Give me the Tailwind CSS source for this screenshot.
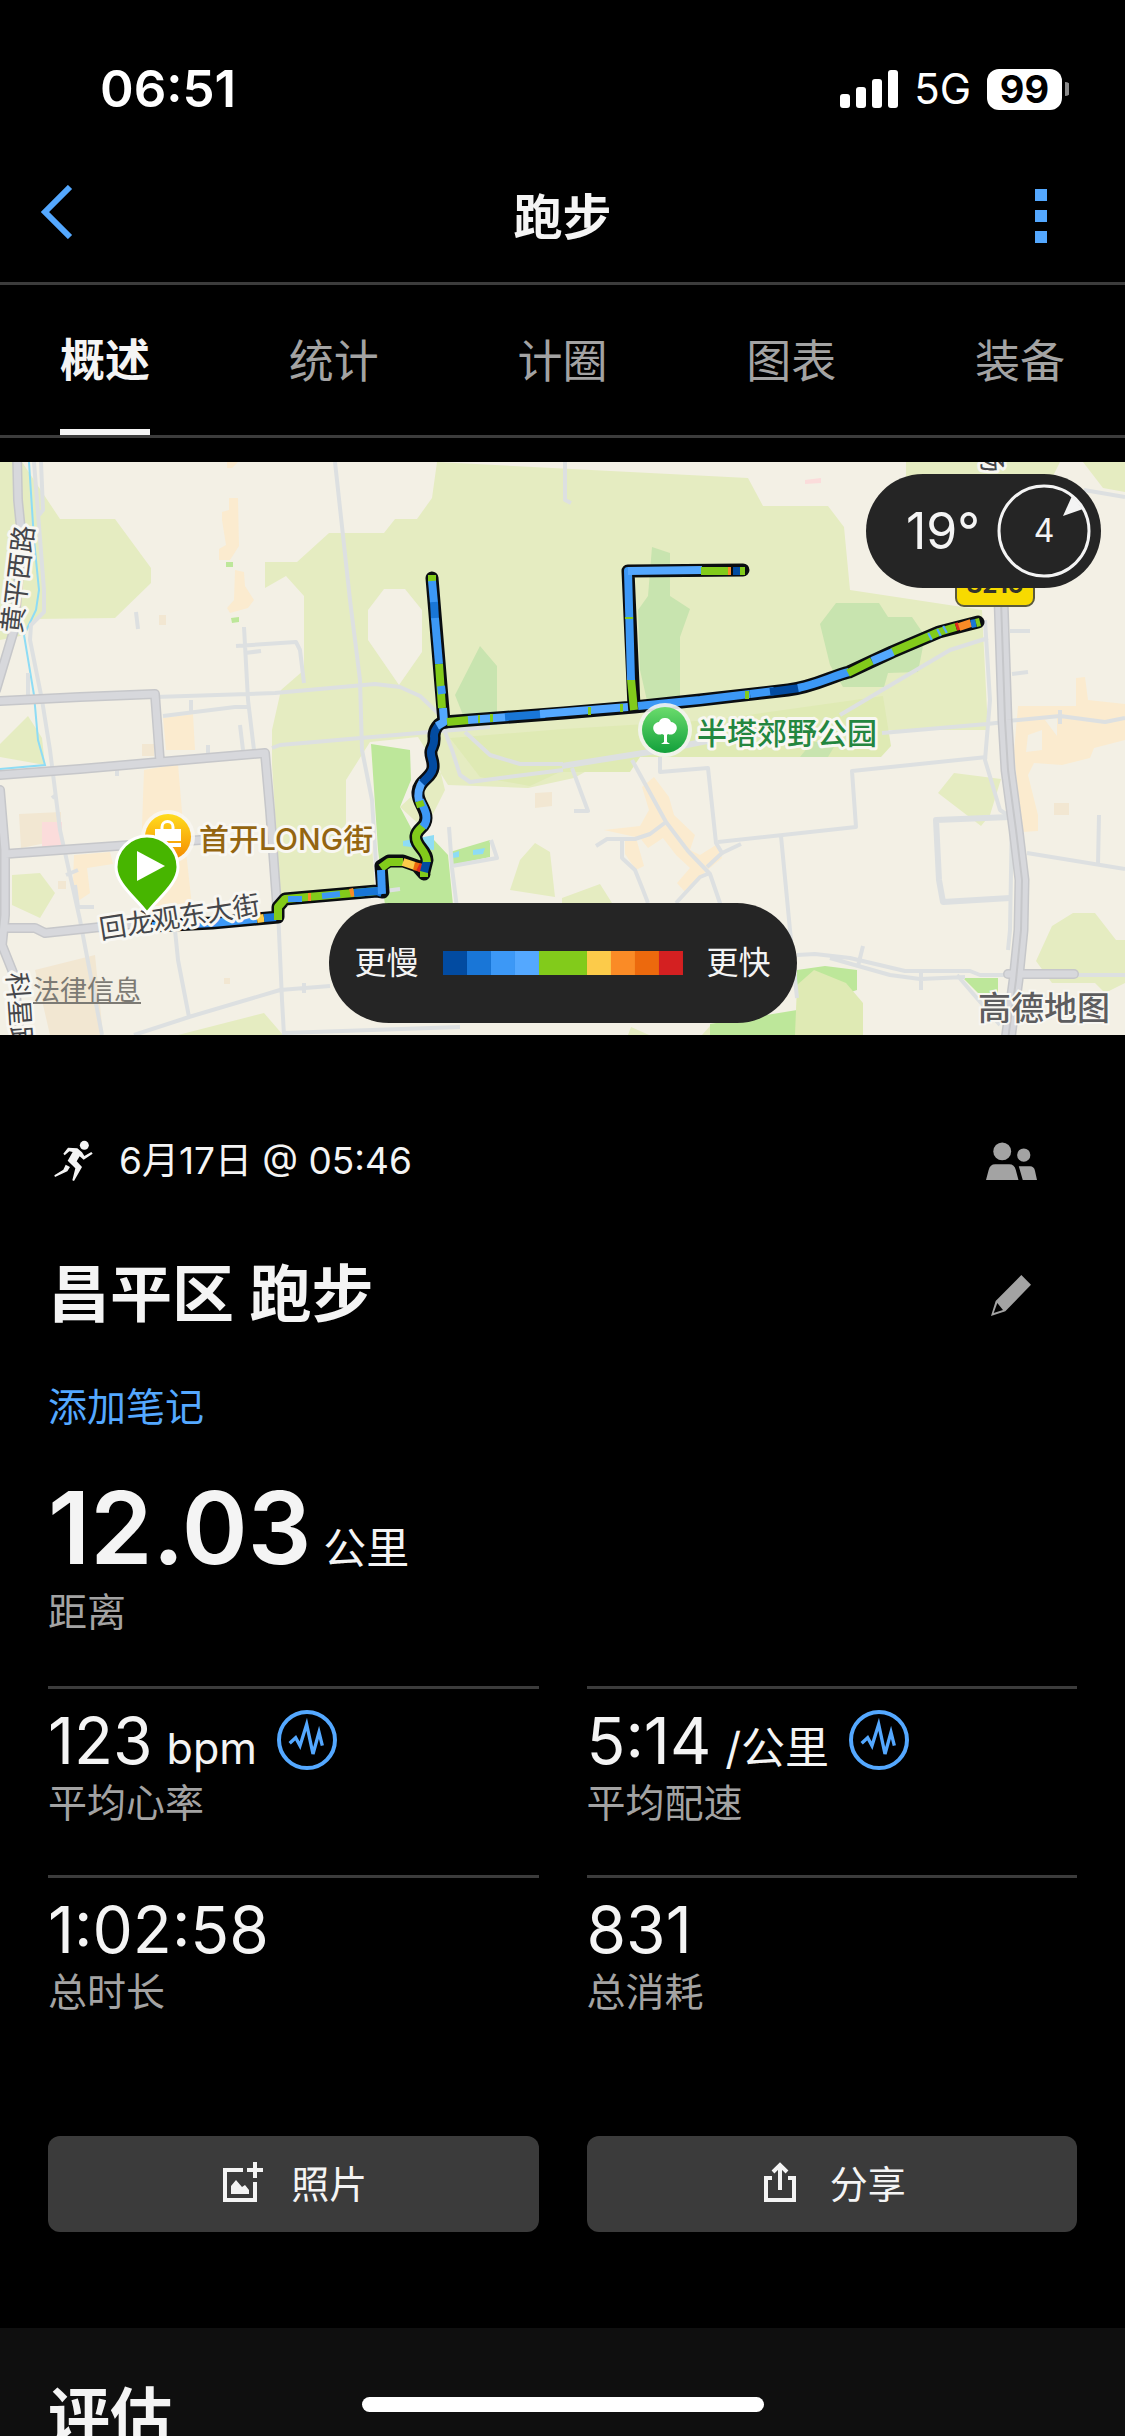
<!DOCTYPE html>
<html lang="zh-CN">
<head>
    <meta charset="UTF-8">
    <meta name="viewport" content="width=device-width, initial-scale=1.0">
    <title>跑步</title>
    <script src="https://cdn.jsdelivr.net/npm/@tailwindcss/browser@4"></script>
</head>
<body class="bg-black text-[#f4f4f4] font-[Inter,'Noto_Sans_CJK_SC',sans-serif]">
    <div class="relative flex flex-col h-screen overflow-hidden">
        <!-- Status bar -->
        <div class="flex shrink-0 items-center justify-between pt-[59px] pb-[31px] pl-[100px] pr-14 text-white leading-[60px]">
            <span class="text-[51px] font-semibold">06:51</span>
            <div class="flex items-center">
                <svg class="w-[58px] h-[38px] mr-4" viewBox="0 0 58 38" fill="currentColor">
                    <rect x="0" y="24" width="10" height="14" rx="3"/>
                    <rect x="16" y="17" width="10" height="21" rx="3"/>
                    <rect x="32" y="9" width="10" height="29" rx="3"/>
                    <rect x="48" y="0" width="10" height="38" rx="3"/>
                </svg>
                <span class="text-[42px] mr-4">5G</span>
                <span class="w-[75px] h-[41px] rounded-xl bg-white text-black text-center text-[38px] leading-[41px] font-bold">99</span>
                <svg class="w-1 h-[14px] ml-[3px]" viewBox="0 0 4 14"><path d="M0 0a7 7 0 0 1 0 14z" fill="#8a8a8a"/></svg>
            </div>
        </div>

        <!-- Header -->
        <header class="grid shrink-0 grid-cols-3 items-center h-[135px] border-b-3 border-[#3c3c3c] px-10">
            <button aria-label="返回" class="justify-self-start -mt-2">
                <svg class="w-[34px] h-[54px]" viewBox="0 0 34 54" fill="none" stroke="#54a8ff" stroke-width="6"><path d="M30 2 5 27l25 25"/></svg>
            </button>
            <h1 class="text-[49px] leading-[60px] pt-1 font-semibold text-center">跑步</h1>
            <button aria-label="更多" class="flex flex-col gap-[9px] justify-self-end mr-[38px]">
                <i class="size-3 bg-[#54a8ff]"></i>
                <i class="size-3 bg-[#54a8ff]"></i>
                <i class="size-3 bg-[#54a8ff]"></i>
            </button>
        </header>

        <!-- Tabs -->
        <nav class="flex shrink-0 justify-between h-[153px] border-b-3 border-[#3c3c3c] px-15 text-[45px] text-[#a3a3a3]">
            <button class="border-b-6 border-[#f4f4f4] pt-2 text-[#f4f4f4] font-semibold">概述</button>
            <button class="pt-1">统计</button>
            <button class="pt-1">计圈</button>
            <button class="pt-1">图表</button>
            <button class="pt-1">装备</button>
        </nav>

        <!-- Map -->
        <div class="relative shrink-0 mt-6">
            <svg class="block w-full" viewBox="0 462 1125 573" font-family="Inter, 'Noto Sans CJK SC', sans-serif">
                <defs>
                    <linearGradient id="park" x1="0" y1="0" x2="0" y2="1"><stop offset="0" stop-color="#6bdc6c"/><stop offset="1" stop-color="#12a03b"/></linearGradient>
                    <linearGradient id="shop" x1="0" y1="0" x2="0" y2="1"><stop offset="0" stop-color="#ffdc1e"/><stop offset="1" stop-color="#f58a00"/></linearGradient>
                </defs>
                <rect y="462" width="1125" height="573" fill="#f3f0e5"/>

                <!-- land -->
                <g fill="#e5ecc1">
                    <path d="M0 462h22l38 57h55l36 49v15l-36 35-80 1-10 16-25 5zM0 744l28-28 14 22 3 27-45-8zM12 875l28-2 15 20-15 25-28-13zM178 1035l86-22 19 22z"/>
                    <path d="M437 462l-5 36-15 21h-22l-11 14h-55l-32 29h-32v26l21-12 18 20v74l-23 20-9 40v34l8 131 95-5-3-45-26-12V780l24-38 48-5 30 48 80 3 46-10 29-16 20-17h240l15-15h110l-6-120-132-20-6-63-16-21h-65l-15-28zM906 462h154l-15 30H906zM1083 462l20 26 22 4v-30zM400 807l40-37 5 20-20 40zM520 860l15-17 15 9 5 45-45-7z"/>
                    <path d="M938 793l16-20 47 6-11 36-9 11zM1036 961l16-35 21-13h22l21 27h9v43l-20 10-10-10h-43zM562 898l38-14 12 19h-50zM702 1035l8-9h75l8 9zM628 1035l3-8 18 8z"/>
                </g>
                <path d="M450 738l113-9 150-9 170-24 8 50-10 11H640l-10 15h-70l-30 14-50-9z" fill="#dfeab4"/>
                <path d="M368 610l16-21h21l17 21v42l-23 33-31-45zM346 785l15-25 9 8v72l-24-12z" fill="#f3f0e5"/>
                <g fill="#c8e4af">
                    <path d="M480 646l17 20v59l-32-5-10-25zM652 547l18 6v43l20 13-10 28v68h-32l-8-35-2-60 10-14zM836 603h43l9 14h24l13 19-7 36-30 1-4 14h-41l-13-22-10-41zM800 757l12-15h25l-9 15z"/>
                </g>
                <g fill="#bde79a">
                    <path d="M371 744l39 6 1 30-11 27 20 38 14-5 14 15 5 50h-68l-7-55zM450 852l40-12v17l-38 8zM226 562h7v5h-7zM231 618l8-1v5l-7 1zM797 970l28-4 32 4v20l-60 20zM710 1024l87-14v25h-87zM963 978h35v25l-13-3z"/>
                </g>
                <path d="M795 1035l2-50 17-15 32 13 17 20v32z" fill="#dfeab4"/>
                <g fill="#fbebcf">
                    <path d="M227 462h11l-6 6h-5zM229 498h9l1 48-9 14h-11v-11l7-4-4-25v-8l7-2zM235 570l9 2 1 14 9 14-6 8-18 5-3-5 7-8zM163 718l30-4 2 36h-29zM144 770l34-6 5 60 9 82h-46l-4-80zM74 855l36-3 3 12-26 4 3 25-12 8-5-20z"/>
                    <path d="M1018 706h58v-28l9-1 3 23 37 4v36l-31 8-4 10-28 7-28-2-6 12 10 40v16l-16 1-8-80zM642 787l12-10 15 20 5 18 21 20-5 15 10 5 16-10 6 13-17 14-5 8-15 12-8-9 13-15-14-13-13-17-15 10-8-10-36-8 36-4 9-16zM625 838h11l8 28-8 4-11-16z"/>
                </g>
                <g fill="#f2e7d2">
                    <path d="M159 615h7v10h-7zM19 814l42-2v28l-40 8zM58 881h8v8h-8zM35 970l60-15 8 80H50zM142 744h12v12h-12zM1054 803h15v12h-15zM535 793l17-1v14l-17 2zM224 978h6v6h-6z"/>
                </g>
                <path d="M42 822h20v25h-20zM805 480l16-2v5l-16 1z" fill="#fbdcdb"/>
                <path d="M403 841l31-6v15l-31-4zM453 853l6-2v6l-6 1zM473 850l12-2-2 6-10 1z" fill="#8edcf5"/>
                <path d="M1028 735l14-5v20l-16 2zM1045 720l12-4v20z" fill="#f3f0e5"/>

                <!-- water -->
                <path d="M29 462l5 78 5 50-3 20-12 25 10 60 4 45 7 25-45 4" fill="none" stroke="#8edcf5" stroke-width="2"/>

                <!-- small streets -->
                <g fill="none" stroke="#dde0e1" stroke-width="4" stroke-linejoin="round">
                    <path d="M34 462l10 128v22l-13 13-1 15 12 60 8 50 10 80 20 90 22 115M41 462l2 48-4 5M335 462l15 138 10 80 2 70 10 50 5 80"/>
                    <path d="M155 697l120-4 100-9 25 3 20 9 20 19M244 627l4 73 6 50M236 646l60-4 4 8 4 33M245 653l16-2M163 716l72-9h14M136 612l2 17M191 700v12M240 725l3 25M272 748l8-3 150-13 60-5M28 673v30"/>
                    <path d="M445 732l7 18 8 25 10 7 93-12M465 732l25 23 30 9h43M565 462v38l6 3M840 715l110-65 38-12M882 733l105-9 18-2M985 620l5 80-5 60 15 50 12 8"/>
                    <path d="M1084 490l41 7M1010 631h20M1012 674l16-2M1007 721l53-5 45 6 20-4M1060 710v14M632 760l34 62 22 29 22 23 12 35M572 768l16 43h-14M660 757v15l48-4 8 75 6 10-15 14M666 822l-16 12-15 5h-28l-11 7M622 840v18l13 12 8 20 5 13M710 873l-10 4-24 26"/>
                    <path d="M718 842l138-15-4-56 135-14M722 853l19-9M781 836l9 94 7 68M1012 815l-2 115-2 20M1027 853l98 16M1099 815l-1 50M797 955l18-1 35 4 55 13h65l10 4h145M830 958l60 17 30 4 45-2M957 975l43 50M921 971v19M863 946l-5 20"/>
                    <path d="M175 930l3 30 11 57 91-27 50-4M278 910l4 90 2 35M134 1035l55-18M284 1033l176-6M449 827l3 41 5 40M452 866l45-8-6-18M385 891l15-2M66 875l12-5M75 885l3 22h16M304 983v10M56 795l-4 3M117 770v6M208 745v8"/>
                    <path d="M1010 817l-74 3 3 60 4 22 67-4M562 766l100-16 60-12 60-6" stroke-width="6"/>
                </g>

                <!-- main roads -->
                <g fill="none" stroke-linejoin="round" stroke-linecap="round">
                    <g stroke="#c6c7ca" stroke-width="10">
                        <path d="M17 455l1 45 4 40-8 90-18 60M0 701l80-4 75-3 5 68M0 775l80-6 80-7 105-9 5 57 7 95M0 790l5 60v65l-3 30 12 30 6 60M5 854l55-4 140-10M5 928h30l10 5 65-7 60-5"/>
                        <path d="M1001 600l4 120 3 50 8 60 6 50-1 50-5 50-8 60" stroke-width="15"/>
                        <path d="M1008 974h66"/>
                    </g>
                    <g stroke="#d7d8dc" stroke-width="7">
                        <path d="M17 455l1 45 4 40-8 90-18 60M0 701l80-4 75-3 5 68M0 775l80-6 80-7 105-9 5 57 7 95M0 790l5 60v65l-3 30 12 30 6 60M5 854l55-4 140-10M5 928h30l10 5 65-7 60-5"/>
                        <path d="M1001 600l4 120 3 50 8 60 6 50-1 50-5 50-8 60" stroke-width="12"/>
                        <path d="M1008 974h66"/>
                    </g>
                    <path d="M1001 600l4 120 3 50 8 60 6 50-1 50-5 50-8 60" stroke="#c6c7ca" stroke-width="2"/>
                </g>

                <!-- route -->
                <g fill="none" stroke-linejoin="round" stroke-linecap="round">
                    <g stroke="#0a0d10" stroke-width="13">
                        <path d="M152 926l60-3 66-6v-10l7-8 92-8 6 1-2-26 8-5h14l14 5 7 8M424 872l3-12c0-10-12-14-11-24 1-8 10-8 10-18s-9-16-8-26c1-12 14-14 15-24 1-8-3-11-2-17 1-5 4-5 3-15 0-6 4-14 12-14"/>
                        <path d="M432 578l12 144 120-9 70-6-6-136 115-1M634 707l66-7 88-10c26-3 44-14 61-18l43-20 47-20 39-10"/>
                    </g>
                    <g stroke-width="8" stroke-linecap="butt">
                        <path d="M152 926l60-3 45-4" stroke="#3c98f6"/>
                        <path d="M257 919l7-1" stroke="#fccb4a"/>
                        <path d="M264 918l12-1" stroke="#1976d7"/>
                        <path d="M278 920v-13l7-8 92-8M381 868l8-6h14" stroke="#82cb1b"/>
                        <path d="M288 899h14M322 896l18-2" stroke="#3c98f6" stroke-width="6"/>
                        <path d="M350 893l4-1M308 897h3" stroke="#fa8b26"/>
                        <path d="M354 893l23-2 5 2" stroke="#1976d7"/>
                        <path d="M382 894l-1-24" stroke="#3c98f6"/>
                        <path d="M403 862l12 4" stroke="#fccb4a"/>
                        <path d="M414 866l8 2" stroke="#ec690d"/>
                        <path d="M418 867l6 3" stroke="#e02a1c"/>
                        <path d="M424 877v-6" stroke="#82cb1b"/>
                        <path d="M424 872l3-12" stroke="#024ba1"/>
                        <path d="M427 862c0-12-12-16-11-26 1-6 6-8 8-11" stroke="#82cb1b"/>
                        <path d="M423 827c8-10 0-20-3-27" stroke="#3c98f6"/>
                        <path d="M421 807l-2-6" stroke="#82cb1b"/>
                        <path d="M419 801c-2-8 0-14 4-20" stroke="#54a8ff"/>
                        <path d="M422 783c6-6 10-9 11-15 1-8-3-11-2-17 1-5 4-5 3-15 0-6 4-10 6-12" stroke="#024ba1"/>
                        <path d="M437 726l7-4-1-14" stroke="#54a8ff"/>
                        <path d="M432 575v7" stroke="#82cb1b"/>
                        <path d="M432 581l2 22" stroke="#3c98f6"/>
                        <path d="M434 602l1 18" stroke="#1976d7"/>
                        <path d="M435 618l4 46" stroke="#3c98f6"/>
                        <path d="M439 664l3 44M447 722l22-2" stroke="#82cb1b"/>
                        <path d="M441 686l1 8" stroke="#3c98f6"/>
                        <path d="M468 720l40-3" stroke="#54a8ff"/>
                        <path d="M490 718h3M478 719h2" stroke="#82cb1b"/>
                        <path d="M505 717l40-3" stroke="#1976d7"/>
                        <path d="M540 714l88-7" stroke="#54a8ff"/>
                        <path d="M588 711h3M620 708h3" stroke="#82cb1b"/>
                        <path d="M634 710l-3-31" stroke="#82cb1b"/>
                        <path d="M631 680l-3-109h3" stroke="#3c98f6"/>
                        <path d="M629 619v-2" stroke="#82cb1b"/>
                        <path d="M628 571l74-1" stroke="#54a8ff"/>
                        <path d="M701 571h27M739 571h6" stroke="#82cb1b"/>
                        <path d="M728 571h3" stroke="#fa8b26"/>
                        <path d="M733 571h7" stroke="#024ba1"/>
                        <path d="M638 706l62-6 50-6" stroke="#3c98f6"/>
                        <path d="M745 695h4" stroke="#82cb1b"/>
                        <path d="M750 694l24-3" stroke="#3c98f6"/>
                        <path d="M770 692l30-4" stroke="#024ba1"/>
                        <path d="M798 688c20-4 35-12 51-16" stroke="#3c98f6"/>
                        <path d="M848 673l24-12M892 652l47-20 17-5" stroke="#82cb1b"/>
                        <path d="M872 661l21-9" stroke="#54a8ff"/>
                        <path d="M929 637l2-1M938 633l2-1M944 630l2-1" stroke="#54a8ff"/>
                        <path d="M956 627l3-1" stroke="#e02a1c"/>
                        <path d="M959 627l12-4" stroke="#fa8b26"/>
                        <path d="M971 624l5-1" stroke="#1976d7"/>
                        <path d="M976 623l4-1" stroke="#82cb1b"/>
                    </g>
                </g>

                <!-- road names -->
                <g font-size="27" fill="#45464a" stroke="#f8f7f2" stroke-width="6" stroke-linejoin="round" paint-order="stroke">
                    <text transform="translate(21 634) rotate(-83)">黄平西路</text>
                    <text transform="translate(101 939) rotate(-9)">回龙观东大街</text>
                    <text transform="translate(7 973) rotate(86)">科星路</text>
                    <text transform="translate(981 446) rotate(86)">汤</text>
                </g>
                <rect x="956" y="560" width="78" height="46" rx="8" fill="#f7da00" stroke="#5b5a3c" stroke-width="2"/>
                <text x="995" y="593" font-size="24" font-weight="700" text-anchor="middle" fill="#33332b">S216</text>

                <!-- places -->
                <circle cx="168" cy="837" r="27" fill="#f8f7f2" fill-opacity=".85"/>
                <circle cx="168" cy="837" r="23" fill="url(#shop)"/>
                <path d="M155 829h26v12h-26zM155 843h26v4h-26z" fill="#fff"/>
                <path d="M162 830v-3a5.500 5.500 0 0 1 11 0v3" fill="none" stroke="#fff" stroke-width="3"/>
                <circle cx="665" cy="730" r="27" fill="#f3f4ee" fill-opacity=".9"/>
                <circle cx="665" cy="730" r="23" fill="url(#park)"/>
                <path d="M665 718a6 6 0 0 1 6 4 6 6 0 0 1 5 9 6 6 0 0 1-8 3l-1 1v7l3 2h-9l3-2v-7l-2-1a6 6 0 0 1-8-3 6 6 0 0 1 5-9 6 6 0 0 1 6-4z" fill="#fff"/>
                <g font-size="30" stroke="#f8f7f2" stroke-width="6" stroke-linejoin="round" paint-order="stroke">
                    <text x="199" y="850" fill="#946510" font-weight="500">首开LONG街</text>
                    <text x="697" y="744" fill="#23863f" font-weight="500">半塔郊野公园</text>
                </g>
                <path d="M147 913c-11-15-31-29-31-46a31 31 0 0 1 62 0c0 17-20 31-31 46z" fill="#47b500" stroke="#fff" stroke-width="3"/>
                <path d="M137 851v30l28-15z" fill="#fff"/>
                <text x="978" y="1020" font-size="33" font-weight="500" fill="#5d5d5f" stroke="#f8f7f2" stroke-width="4" paint-order="stroke">高德地图</text>
            </svg>

            <a href="#" class="absolute left-[33px] bottom-[26px] text-[27px] leading-9 text-[#7c7a74] underline decoration-2 underline-offset-2">法律信息</a>

            <div class="absolute top-3 right-6 flex items-center gap-4 h-[114px] rounded-full bg-[#252525] pl-10 pr-[9px]">
                <span class="text-[50px]">19°</span>
                <div class="relative size-24">
                    <svg class="size-24" viewBox="0 0 96 96"><circle cx="48" cy="48" r="45" fill="none" stroke="#f4f4f4" stroke-width="3"/><path d="M67 33l9-20 11 13z" fill="#f4f4f4"/></svg>
                    <span class="absolute inset-0 text-center text-[32px] leading-24">4</span>
                </div>
            </div>

            <div class="absolute bottom-3 left-1/2 -translate-x-1/2 flex items-center gap-6 h-[120px] rounded-full bg-[#252525] px-[26px] text-[32px] whitespace-nowrap">
                <span>更慢</span>
                <div class="flex h-6">
                    <i class="w-6 bg-[#024ba1]"></i>
                    <i class="w-6 bg-[#1976d7]"></i>
                    <i class="w-6 bg-[#3c98f6]"></i>
                    <i class="w-6 bg-[#54a8ff]"></i>
                    <i class="w-12 bg-[#82cb1b]"></i>
                    <i class="w-6 bg-[#fccb4a]"></i>
                    <i class="w-6 bg-[#fa8b26]"></i>
                    <i class="w-6 bg-[#ec690d]"></i>
                    <i class="w-6 bg-[#d42021]"></i>
                </div>
                <span>更快</span>
            </div>
        </div>

        <!-- Summary -->
        <main class="shrink-0 px-12 pt-24 pb-24">
            <div class="flex items-center justify-between h-[60px] pr-10">
                <div class="flex items-center gap-[26px] pl-1.5 text-[37px]">
                    <svg class="w-[39px] h-[42px]" viewBox="40 60 117 126" fill="currentColor">
                        <circle cx="131" cy="76" r="13.500"/>
                        <path d="M82 83l28 2 14 12 7 11 21-12 4 5-27 18-12-10-9 15 16 17-24 42-5-2 9-36-23-23 15-26-10-2-14 12-4-5zM75 134l13 7-8 13-37 17-2-5 27-17z"/>
                    </svg>
                    <span>6月17日 @ 05:46</span>
                </div>
                <button aria-label="好友" class="text-[#a3a3a3]">
                    <svg class="w-[51px] h-[38px]" viewBox="77 68 154 114" fill="currentColor">
                        <circle cx="126" cy="96" r="27"/><circle cx="191" cy="107" r="20"/>
                        <path d="M77 182l8-30q4-17 20-17h42q16 0 20 17l8 30zM176 141h34q12 0 15 14l6 27h-43z"/>
                    </svg>
                </button>
            </div>
            <div class="flex items-center justify-between h-[72px] mt-[68px] pr-[46px]">
                <h2 class="text-[62px] leading-[72px] font-semibold">昌平区 跑步</h2>
                <button aria-label="编辑" class="text-[#a3a3a3]">
                    <svg class="w-10 h-[41px]" viewBox="93 459 120 123" fill="currentColor"><path fill-rule="evenodd" d="M184 459l29 29-77 80-43 14 14-45zM112 543l-11 30 28-9z"/></svg>
                </button>
            </div>
            <a href="#" class="block w-fit mt-[52px] text-[39px] leading-12 text-[#54a8ff]">添加笔记</a>

            <dl>
                <div class="flex flex-col-reverse gap-[10px] mt-[47px] mb-[50px]">
                    <dt class="text-[39px] leading-12 text-[#a3a3a3]">距离</dt>
                    <dd class="flex items-baseline gap-3 text-[43px] leading-none"><span class="text-[100px] font-semibold">12.03</span>公里</dd>
                </div>
                <div class="grid grid-cols-2 gap-x-12">
                    <div class="flex flex-col-reverse gap-1.5 border-t-3 border-[#3c3c3c] pt-5 pb-12">
                        <dt class="text-[39px] leading-12 text-[#a3a3a3]">平均心率</dt>
                        <dd class="flex h-16 gap-5">
                            <div class="flex items-baseline gap-[14px] text-[43px] leading-none"><span class="text-[64px]">123</span>bpm</div>
                            <svg class="size-15 mt-px" viewBox="234 60 180 180" fill="none" stroke="#54a8ff" stroke-width="12"><circle cx="324" cy="150" r="84"/><path d="M272 160l18-17 13 24 20-64 19 89 18-65 10 40" stroke-width="10"/></svg>
                        </dd>
                    </div>
                    <div class="flex flex-col-reverse gap-1.5 border-t-3 border-[#3c3c3c] pt-5 pb-12">
                        <dt class="text-[39px] leading-12 text-[#a3a3a3]">平均配速</dt>
                        <dd class="flex h-16 gap-5">
                            <div class="flex items-baseline gap-[14px] text-[44px] leading-none"><span class="text-[64px]">5:14</span>/公里</div>
                            <svg class="size-15 mt-px" viewBox="234 60 180 180" fill="none" stroke="#54a8ff" stroke-width="12"><circle cx="324" cy="150" r="84"/><path d="M272 160l18-17 13 24 20-64 19 89 18-65 10 40" stroke-width="10"/></svg>
                        </dd>
                    </div>
                    <div class="flex flex-col-reverse gap-1.5 border-t-3 border-[#3c3c3c] pt-5 pb-12">
                        <dt class="text-[39px] leading-12 text-[#a3a3a3]">总时长</dt>
                        <dd class="text-[64px] leading-none">1:02:58</dd>
                    </div>
                    <div class="flex flex-col-reverse gap-1.5 border-t-3 border-[#3c3c3c] pt-5 pb-12">
                        <dt class="text-[39px] leading-12 text-[#a3a3a3]">总消耗</dt>
                        <dd class="text-[64px] leading-none">831</dd>
                    </div>
                </div>
            </dl>

            <div class="grid grid-cols-2 gap-12 mt-[72px] text-[38px]">
                <button class="flex items-center justify-center gap-7 h-24 rounded-xl bg-[#3b3b3b] pl-1">
                    <svg class="size-10 -mt-1" viewBox="0 0 40 40"><path d="M20 8H2v30h30V20" fill="none" stroke="currentColor" stroke-width="4"/><path d="M30 0h4v6h6v4h-6v6h-4v-6h-6V6h6zM8 32v-8l5-6 6 7 3-2 4 5v4z" fill="currentColor"/></svg>
                    照片
                </button>
                <button class="flex items-center justify-center gap-7 h-24 rounded-xl bg-[#3b3b3b] pl-1">
                    <svg class="size-10 -mt-1" viewBox="0 0 40 40" fill="none" stroke="currentColor" stroke-width="4"><path d="M10 16H4v22h28V16h-6M18 28V4M11 10l7-7 7 7"/></svg>
                    分享
                </button>
            </div>
        </main>

        <section class="grow bg-[#0f0f0f] px-12 pt-[54px]">
            <h2 class="text-[62px] leading-[72px] font-semibold">评估</h2>
        </section>

        <div class="absolute bottom-6 left-1/2 -translate-x-1/2 w-[402px] h-[15px] rounded-full bg-white"></div>
    </div>
</body>
</html>
